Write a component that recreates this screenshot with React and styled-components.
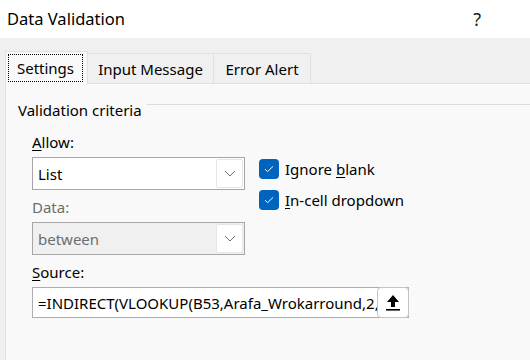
import React from "react";
import styled, { createGlobalStyle } from "styled-components";

const GlobalStyle = createGlobalStyle`
  html, body {
    margin: 0;
    padding: 0;
  }
  body {
    width: 530px;
    height: 360px;
    overflow: hidden;
    background: #f0f0f0;
    font-family: "Segoe UI", "Noto Sans", "Open Sans", sans-serif;
    color: #000;
  }
`;

const Dialog = styled.div`
  width: 530px;
  height: 360px;
  display: flex;
  flex-direction: column;
  background: #f0f0f0;
`;

const TitleBar = styled.div`
  height: 38px;
  flex: none;
  background: #fff;
  display: flex;
  align-items: center;
  padding-left: 7px;
`;

const Title = styled.div`
  flex: 1;
  font-size: 16.5px;
  line-height: 24px;
`;

const Help = styled.div`
  margin-right: 49px;
  font-size: 18px;
  line-height: 24px;
  color: #222;
`;

const TabStrip = styled.div`
  display: flex;
  align-items: flex-end;
  height: 32px;
  padding: 13px 0 0 5px;
  flex: none;
`;

const Tab = styled.div`
  position: relative;
  z-index: ${(p) => (p.$active ? 1 : 0)};
  box-sizing: border-box;
  width: ${(p) => p.$width}px;
  height: ${(p) => (p.$active ? 33 : 30)}px;
  margin-bottom: ${(p) => (p.$active ? -1 : 0)}px;
  margin-left: ${(p) => (p.$first ? 0 : -1)}px;
  display: flex;
  align-items: center;
  justify-content: center;
  border: 1px solid #e1e1e1;
  border-bottom: none;
  background: ${(p) => (p.$active ? "#f9f9f9" : "#f0f0f0")};
  font-size: 15px;
`;

const FocusRing = styled.span`
  flex: 1;
  align-self: stretch;
  margin: 2px 4px 2px 2px;
  border: 1px dotted #000;
  display: flex;
  align-items: center;
  justify-content: center;
`;

const Panel = styled.div`
  flex: 1;
  margin-left: 5px;
  border-top: 1px solid #e1e1e1;
  border-left: 1px solid #e1e1e1;
  background: #f9f9f9;
  padding: 16px 0 0 12px;
`;

const Legend = styled.div`
  display: flex;
  align-items: flex-start;
  font-size: 15px;
  line-height: 20px;
`;

const Rule = styled.div`
  flex: 1;
  height: 1px;
  margin: 4px 0 0 5px;
  background: #dcdcdc;
`;

const Form = styled.div`
  margin: 12px 0 0 14px;
  display: flex;
  flex-direction: column;
`;

const Row = styled.div`
  display: flex;
  align-items: flex-start;
  gap: 14px;
  height: 33px;
`;

const Label = styled.div`
  font-size: 15px;
  line-height: 20px;
  margin: ${(p) => (p.$first ? 0 : 7)}px 0 5px;
  color: ${(p) => (p.$disabled ? "#6d6d6d" : "#000")};

  u {
    text-decoration-thickness: 1px;
    text-underline-offset: 2px;
  }
`;

const Combo = styled.div`
  box-sizing: border-box;
  flex: none;
  height: 33px;
  width: 213px;
  display: flex;
  align-items: center;
  border: 1px solid #a6a6a6;
  background: ${(p) => (p.$disabled ? "#f0f0f0" : "#fff")};
  padding: 1px 1px 1px 0;
`;

const ComboText = styled.div`
  flex: 1;
  padding-left: 5px;
  font-size: 15px;
  color: ${(p) => (p.$disabled ? "#6d6d6d" : "#000")};
`;

const DropButton = styled.div`
  box-sizing: border-box;
  width: 27px;
  height: 29px;
  border: 1px solid #e6e6e6;
  border-radius: 2px;
  background: #fff;
  display: flex;
  align-items: center;
  justify-content: center;
`;

const Checks = styled.div`
  display: flex;
  flex-direction: column;
  gap: 11px;
  padding-top: 2px;
`;

const CheckRow = styled.label`
  display: flex;
  align-items: center;
  gap: 6px;
  font-size: 15px;
  line-height: 20px;

  u {
    text-decoration-thickness: 1px;
    text-underline-offset: 2px;
  }
`;

const Box = styled.span`
  width: 20px;
  height: 20px;
  border-radius: 4px;
  background: #0063be;
  display: flex;
  align-items: center;
  justify-content: center;
`;

const SourceField = styled.div`
  box-sizing: border-box;
  width: 377px;
  height: 31px;
  display: flex;
  align-items: center;
  border: 1px solid #adadad;
  background: #fff;
`;

const SourceText = styled.div`
  flex: 1;
  overflow: hidden;
  white-space: nowrap;
  padding-left: 5px;
  font-size: 15px;
`;

const RefButton = styled.div`
  box-sizing: border-box;
  width: 32px;
  height: 31px;
  margin-right: -1px;
  border: 1px solid #c4c4c4;
  border-radius: 4px;
  background: #fff;
  display: flex;
  align-items: center;
  justify-content: center;
`;

const Chevron = () => (
  <svg width="12" height="7" viewBox="0 0 12 7">
    <path d="M1 1 L6 6 L11 1" fill="none" stroke="#707070" strokeWidth="1" />
  </svg>
);

const Tick = () => (
  <svg width="12" height="10" viewBox="0 0 12 10">
    <path d="M2 5.2 L4.6 7.6 L10 2.4" fill="none" stroke="#fff" strokeWidth="1" />
  </svg>
);

const UploadIcon = () => (
  <svg width="16" height="18" viewBox="0 0 16 18">
    <path d="M8 1 L14 8 L10 8 L10 13 L6 13 L6 8 L2 8 Z" fill="#000" />
    <rect x="1" y="15" width="14" height="1.6" fill="#000" />
  </svg>
);

const tabs = [
  { name: "Settings", width: 83 },
  { name: "Input Message", width: 127 },
  { name: "Error Alert", width: 98 },
];

export default function App() {
  return (
    <Dialog>
      <GlobalStyle />
      <TitleBar>
        <Title>Data Validation</Title>
        <Help>?</Help>
      </TitleBar>
      <TabStrip>
        {tabs.map((t, i) => (
          <Tab key={t.name} $width={t.width} $active={i === 0} $first={i === 0}>
            {i === 0 ? <FocusRing>{t.name}</FocusRing> : t.name}
          </Tab>
        ))}
      </TabStrip>
      <Panel>
        <Legend>
          Validation criteria
          <Rule />
        </Legend>
        <Form>
          <Label $first>
            <u>A</u>llow:
          </Label>
          <Row>
            <Combo>
              <ComboText>List</ComboText>
              <DropButton>
                <Chevron />
              </DropButton>
            </Combo>
            <Checks>
              <CheckRow>
                <Box>
                  <Tick />
                </Box>
                <span>
                  Ignore <u>b</u>lank
                </span>
              </CheckRow>
              <CheckRow>
                <Box>
                  <Tick />
                </Box>
                <span>
                  <u>I</u>n-cell dropdown
                </span>
              </CheckRow>
            </Checks>
          </Row>
          <Label $disabled>Data:</Label>
          <Combo $disabled>
            <ComboText $disabled>between</ComboText>
            <DropButton>
              <Chevron />
            </DropButton>
          </Combo>
          <Label>
            <u>S</u>ource:
          </Label>
          <SourceField>
            <SourceText>=INDIRECT(VLOOKUP(B53,Arafa_Wrokarround,2,FALSE))</SourceText>
            <RefButton>
              <UploadIcon />
            </RefButton>
          </SourceField>
        </Form>
      </Panel>
    </Dialog>
  );
}
